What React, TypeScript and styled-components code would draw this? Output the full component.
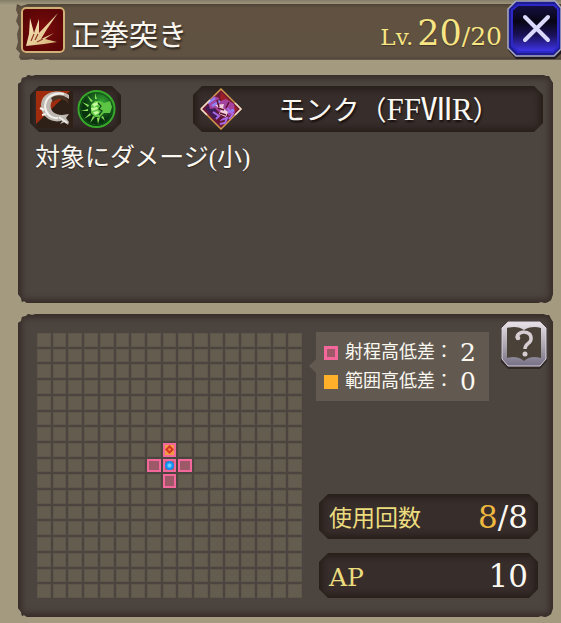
import React from "react";
import styled, { createGlobalStyle } from "styled-components";

const numerals = `"DejaVu Serif", "Liberation Serif", serif`;

const GlobalStyle = createGlobalStyle`
  * { box-sizing: border-box; }
  html, body { margin: 0; }
  body {
    min-height: 100vh;
    background: linear-gradient(to bottom, #857c68 0, #a39a80 5px);
    color: #fbf8f2;
    font-family: "Liberation Serif", "Noto Sans CJK JP", serif;
  }
  button { border: 0; padding: 0; background: none; cursor: pointer; }
  svg { display: block; }
  h1, h2, p, dl, dd, dt { margin: 0; font-weight: 400; }
`;

const Page = styled.main`
  padding: 0 0 6px;
`;

const Header = styled.header`
  display: flex;
  align-items: center;
  height: 60px;
  margin-left: 16px;
  background: linear-gradient(to bottom, transparent 4px, #4d4235 4px, #605140 8px, #605242 56px, #51463a 59px, #71695a 60px);
  clip-path: polygon(
    1px 4px, 5px 6px, 12px 4px, 100% 0, 100% 100%, 40px 100%, 37px 62px, 32px 59px, 25px 60px,
    22px 62px, 17px 59px, 11px 60px, 6px 62px, 3px 57px, 4px 53px, 0 49px, 2px 42px, 1px 34px,
    3px 27px, 0 21px, 2px 15px, 0 10px
  );
`;

const SkillBadge = styled.span`
  flex: none;
  margin: 0 5px 0 4px;
`;

const Title = styled.h1`
  flex: 1;
  padding-top: 12px;
  font-size: 29px;
  line-height: 44px;
  text-shadow: 1px 2px 2px #2b241d;
`;

const Level = styled.p`
  display: flex;
  align-items: baseline;
  padding-top: 10px;
  margin-right: 5px;
  color: #f8e584;
  font-family: ${numerals};
  font-size: 23px;
  line-height: 44px;
  text-shadow: 0 1px 1px #40362b;
`;

const LevelNow = styled.strong`
  margin-left: 4px;
  font-size: 35px;
  font-weight: 400;
`;

const LevelMax = styled.span`
  font-size: 25px;
`;

const IconButton = styled.button`
  flex: none;
`;

const CloseButton = styled(IconButton)`
  align-self: flex-start;
`;

const Panel = styled.section`
  margin: 0 8px 0 18px;
  background: #4c443f;
  box-shadow: inset 0 0 7px 3px #342924;
  clip-path: polygon(
    0 9px, 3px 7px, 4px 3px, 8px 2px, 10px 0, 14px 1px, 18px 0,
    calc(100% - 10px) 0, calc(100% - 7px) 1px, calc(100% - 4px) 1px, calc(100% - 2px) 5px, 100% 8px,
    100% calc(100% - 9px), calc(100% - 2px) calc(100% - 3px), calc(100% - 5px) calc(100% - 1px),
    calc(100% - 8px) 100%, calc(100% - 12px) calc(100% - 1px), calc(100% - 15px) 100%,
    9px 100%, 6px calc(100% - 2px), 4px calc(100% - 1px), 3px calc(100% - 5px), 0 calc(100% - 9px)
  );
`;

const SkillPanel = styled(Panel)`
  min-height: 228px;
  margin-top: 15px;
  padding: 11px 10px 11px 12px;
`;

const RangePanel = styled(Panel)`
  display: grid;
  grid-template-columns: 265fr 237fr;
  gap: 8px;
  margin-top: 11px;
  padding: 7px 6px 19px 19px;
`;

const Plate = styled.div`
  position: relative;
  z-index: 0;
  display: flex;
  align-items: center;
  height: 46px;
  background: #271e19;
  clip-path: polygon(
    9px 0, calc(100% - 9px) 0, 100% 9px, 100% calc(100% - 9px),
    calc(100% - 9px) 100%, 9px 100%, 0 calc(100% - 9px), 0 9px
  );

  &::before {
    content: "";
    position: absolute;
    z-index: -1;
    inset: 4px;
    background: #372d2b;
    filter: blur(3px);
  }
`;

const SkillTop = styled.div`
  display: flex;
  justify-content: space-between;
  gap: 16px;
`;

const TypePlate = styled(Plate)`
  flex: none;
  gap: 4px;
  padding: 0 5px 0 6px;
`;

const JobPlate = styled(Plate)`
  flex: 0 1 350px;
  padding: 0 7px;
`;

const JobName = styled.h2`
  flex: 1;
  padding-top: 3px;
  font-size: 27px;
  line-height: 46px;
  text-align: center;
  white-space: nowrap;
  text-shadow: 1px 2px 2px #120d0b;
`;

const Latin = styled.span`
  font-size: 31px;
`;

const Description = styled.p`
  padding: 8px 5px;
  font-size: 25px;
  line-height: 36px;
  text-shadow: 0 1px 1px #2b241d;
`;

const Board = styled.div`
  display: grid;
  grid-template-columns: repeat(17, minmax(0, 1fr));
  grid-template-rows: repeat(17, minmax(0, 1fr));
  gap: 2px;
  aspect-ratio: 1;
  align-self: start;
  margin-top: 12px;
`;

type CellKind = "empty" | "range" | "effect" | "self";

const cellFill: Record<CellKind, string> = {
  empty: "#645c4f",
  range: "#9d5968",
  effect: "#f39a45",
  self: "radial-gradient(circle, #6bd5ff 0 1px, #168df0 3px 4px, #a75b75 5px)",
};

const Cell = styled.span<{ $kind: CellKind }>`
  display: grid;
  place-items: center;
  border: ${(p) => (p.$kind === "empty" ? "1px solid #5e564b" : "2px solid #f3679a")};
  background: ${(p) => cellFill[p.$kind]};
`;

const Side = styled.div`
  display: flex;
  flex-direction: column;
  justify-content: space-between;
`;

const SideTop = styled.div`
  display: flex;
  align-items: flex-start;
  justify-content: space-between;
`;

const Legend = styled.dl`
  position: relative;
  margin: 11px 0 0 6px;
  padding: 6px 13px 5px 8px;
  background: #625a50;

  &::before {
    content: "";
    position: absolute;
    right: 100%;
    top: 27px;
    border: 7px solid transparent;
    border-left: 0;
    border-right-color: #625a50;
  }
`;

const LegendRow = styled.div`
  display: flex;
  align-items: center;
  height: 29px;
  font-size: 18px;
  line-height: 29px;
`;

const Swatch = styled.span<{ $fill: string; $edge: string }>`
  width: 14px;
  height: 14px;
  margin-right: 7px;
  border: 3px solid ${(p) => p.$edge};
  background: ${(p) => p.$fill};
`;

const LegendValue = styled.dd`
  width: 16px;
  margin-left: 7px;
  font-family: ${numerals};
  font-size: 25px;
  text-align: center;
`;

const Stats = styled.dl`
  display: grid;
  gap: 14px;
  margin: 0 9px;
`;

const StatPlate = styled(Plate)`
  justify-content: space-between;
  height: 45px;
  padding: 0 10px;
`;

const StatName = styled.dt`
  padding-top: 5px;
  color: #ecdc7e;
  font-size: 23px;
  line-height: 40px;
`;

const StatLatinName = styled(StatName)`
  font-family: ${numerals};
  font-size: 25px;
`;

const StatValue = styled.dd`
  padding-top: 2px;
  font-family: ${numerals};
  font-size: 31px;
  line-height: 43px;
`;

const Remaining = styled.span`
  color: #edb83f;
`;

const ClawIcon = () => (
  <svg width="46" height="48" viewBox="0 0 46 48" aria-hidden="true">
    <defs>
      <linearGradient id="clawGold" x1="0" y1="0" x2="1" y2="1">
        <stop offset="0" stopColor="#fff3c8" />
        <stop offset="1" stopColor="#d3ad72" />
      </linearGradient>
      <radialGradient id="clawRed">
        <stop offset="0" stopColor="#7d0c0d" />
        <stop offset="1" stopColor="#5c0506" />
      </radialGradient>
    </defs>
    <rect x="1" y="1" width="44" height="46" rx="5" fill="#332218" />
    <rect x="2" y="2" width="42" height="44" rx="4" fill="url(#clawRed)" stroke="#d0b076" strokeWidth="2" />
    <path
      d="M6 40 L9 28 L10 12 L14 27 L19 13 L19 27 L38 7 L27 23 L21 33 L34 27 L25 33 L37 36 L24 38 Z"
      fill="url(#clawGold)"
    />
    <path d="M11 35 L14 28 M15 34 L18 28 M17 36 L23 33" stroke="#8b3a26" strokeWidth="1.2" />
  </svg>
);

const CloseIcon = () => (
  <svg width="54" height="59" viewBox="0 0 54 59" aria-hidden="true">
    <defs>
      <linearGradient id="closeFill" x1="0" y1="0" x2="0" y2="1">
        <stop offset="0" stopColor="#151044" />
        <stop offset="0.35" stopColor="#080514" />
        <stop offset="0.65" stopColor="#1b125c" />
        <stop offset="1" stopColor="#4136f0" />
      </linearGradient>
    </defs>
    <path d="M9 2 H49 L55 8 V53 L48 59 H9 L1 50 V10 Z" fill="#201b23" />
    <path d="M9 1 H48 L54 8 V49 L47 56 H9 L1 48 V9 Z" fill="#1f1b90" stroke="#a9acc3" strokeWidth="1.5" />
    <path d="M11 5 H47 L51 9 V47 L46 52 H11 L5 46 V10 Z" fill="url(#closeFill)" stroke="#2c28c8" strokeWidth="2" />
    <path d="M18 17 L41 40 M41 17 L18 40" stroke="#dad9fb" strokeWidth="4" strokeLinecap="round" />
  </svg>
);

const SlashIcon = () => (
  <svg width="37" height="38" viewBox="0 0 37 38" aria-hidden="true">
    <path d="M0 1 H37 V38 H0 Z" fill="#2e2017" />
    <path d="M0 1 H34 L0 34 Z" fill="#a02c0d" />
    <path
      d="M33 5 C26 0 13 0 7 8 C2 17 7 29 18 31 C22 32 25 31 27 30 L24 34 L29 32 L32 35 L33 32 L30 28 L33 24 L26 25 C18 25 13 20 15 13 C18 6 26 4 33 9 Z"
      fill="#bdb7af"
    />
    <path d="M15 8 C19 5 26 4 31 8 L33 15 C30 8 22 7 17 12 Z" fill="#4a3426" />
    <path d="M28 4 C16 2 9 8 9 17 C10 24 15 29 22 28 M8 20 L4 18 M10 24 L6 25" fill="none" stroke="#f2f0ec" strokeWidth="2" />
    <path d="M23 27 L31 33" stroke="#efede7" strokeWidth="2" />
  </svg>
);

const FistIcon = () => (
  <svg width="39" height="40" viewBox="0 0 39 40" aria-hidden="true">
    <defs>
      <radialGradient id="fistGreen" cx="0.65" cy="0.3">
        <stop offset="0" stopColor="#34a534" />
        <stop offset="1" stopColor="#07330d" />
      </radialGradient>
    </defs>
    <circle cx="19.5" cy="20" r="18" fill="url(#fistGreen)" stroke="#37a82a" strokeWidth="2" />
    <circle cx="19.5" cy="20" r="16" fill="none" stroke="#14531c" strokeWidth="1" />
    <path
      d="M10 6 L16 12 L14 13 Z M18 4 L20 10 H18 Z M5 13 L12 16 L11 18 Z M4 22 L11 20 V22 Z M7 30 L13 24 L14 26 Z M13 34 L16 27 L18 28 Z M21 35 L20 29 L23 28 Z M28 32 L24 28 L26 27 Z"
      fill="#8ce15e"
    />
    <path d="M14 16 L18 12 H23 L27 14 L33 12 L35 18 L33 24 L27 24 L23 28 H18 L14 24 Z" fill="#5cc544" />
    <path d="M15 15 L20 13 L22 15 L17 18 Z M14 19 L20 18 L21 20 L15 22 Z M16 23 L21 22 L22 24 L18 26 Z" fill="#c4f99b" />
    <path d="M21 14 L24 17 L22 20 L25 22 L22 26" fill="none" stroke="#164b19" strokeWidth="1.3" />
  </svg>
);

const JobIcon = () => (
  <svg width="42" height="42" viewBox="0 0 42 42" aria-hidden="true">
    <path d="M21 1 L41 21 L21 41 L1 21 Z" fill="#6a1938" stroke="#d39a4c" strokeWidth="1.5" />
    <path d="M21 4 L38 21 L31 28 L20 10 Z" fill="#9e1f26" />
    <path d="M5 20 L13 13 L19 31 L14 31 Z" fill="#401d57" />
    <path d="M8 14 L14 8 L19 10 L18 14 L26 11 L34 16 L35 25 L29 28 L26 24 L20 25 L15 20 L10 21 Z" fill="#a5449f" />
    <path d="M8 15 L15 10 M12 18 L20 13 M28 24 L34 22" stroke="#8c83fa" strokeWidth="2.5" />
    <path d="M15 17 L24 16 L23 20 L28 24 L26 29 L19 26 L21 22 Z" fill="#f0d0df" />
    <path d="M13 24 L19 28 L16 31 M20 32 L27 30 L25 35 L20 36 M27 20 L33 26 L29 31" fill="none" stroke="#a66ae8" strokeWidth="2" />
    <path d="M18 20 L24 22 M20 25 L26 27 M17 12 L19 19 M29 14 L26 20 M23 29 L17 34" stroke="#611133" strokeWidth="1.5" />
    <path d="M1 21 L10 12 M1 21 L7 27 M35 15 L41 21 L35 27" fill="none" stroke="#efdbd1" strokeWidth="1.5" />
  </svg>
);

const HelpIcon = () => (
  <svg width="46" height="48" viewBox="0 0 46 48" aria-hidden="true">
    <defs>
      <linearGradient id="silver" x1="0" y1="0" x2="0" y2="1">
        <stop offset="0" stopColor="#e9e2e9" />
        <stop offset="0.55" stopColor="#aaa4ad" />
        <stop offset="1" stopColor="#777086" />
      </linearGradient>
    </defs>
    <path d="M8 2 H38 L46 9 V40 L39 48 H7 L0 41 V9 Z" fill="#302925" />
    <path d="M7 1 H39 L45 7 V38 L39 45 H7 L1 38 V7 Z" fill="url(#silver)" stroke="#dbd4df" strokeWidth="1" />
    <path d="M6 7 C13 5 19 6 23 9 C27 6 34 5 40 7 V37 C33 35 27 36 23 40 C19 36 12 35 6 37 Z" fill="#4a4239" />
    <path d="M16 17 C16 9 31 9 30 18 C30 23 24 22 24 28" fill="none" stroke="#d6ced2" strokeWidth="3.5" />
    <circle cx="17" cy="17" r="2.3" fill="#d6ced2" />
    <circle cx="24" cy="33" r="2.5" fill="#d6ced2" />
  </svg>
);

const TargetMark = () => (
  <svg width="9" height="9" viewBox="0 0 10 10" aria-hidden="true">
    <path d="M5 0 L10 5 L5 10 L0 5 Z" fill="#d63327" />
    <circle cx="5" cy="5" r="1.5" fill="#f98a3d" />
  </svg>
);

const SIZE = 17;
const CENTER = 8;

const marked: Record<string, CellKind> = {
  [`${CENTER},${CENTER}`]: "self",
  [`${CENTER},${CENTER - 1}`]: "effect",
  [`${CENTER - 1},${CENTER}`]: "range",
  [`${CENTER + 1},${CENTER}`]: "range",
  [`${CENTER},${CENTER + 1}`]: "range",
};

const cells: CellKind[] = Array.from(
  { length: SIZE * SIZE },
  (_, i) => marked[`${i % SIZE},${Math.floor(i / SIZE)}`] ?? "empty",
);

export default function App() {
  return (
    <>
      <GlobalStyle />
      <Page>
        <Header>
          <SkillBadge><ClawIcon /></SkillBadge>
          <Title>正拳突き</Title>
          <Level>
            Lv.<LevelNow>20</LevelNow><LevelMax>/20</LevelMax>
          </Level>
          <CloseButton type="button" aria-label="閉じる"><CloseIcon /></CloseButton>
        </Header>

        <SkillPanel>
          <SkillTop>
            <TypePlate>
              <SlashIcon />
              <FistIcon />
            </TypePlate>
            <JobPlate>
              <JobIcon />
              <JobName>モンク（<Latin>FFⅦR</Latin>）</JobName>
            </JobPlate>
          </SkillTop>
          <Description>対象にダメージ(小)</Description>
        </SkillPanel>

        <RangePanel>
          <Board role="img" aria-label="射程と範囲">
            {cells.map((kind, i) => (
              <Cell key={i} $kind={kind}>{kind === "effect" && <TargetMark />}</Cell>
            ))}
          </Board>
          <Side>
            <SideTop>
              <Legend>
                <LegendRow>
                  <Swatch $fill="#9d5968" $edge="#f3679a" />
                  <dt>射程高低差：</dt>
                  <LegendValue>2</LegendValue>
                </LegendRow>
                <LegendRow>
                  <Swatch $fill="#ffb02b" $edge="#ffb02b" />
                  <dt>範囲高低差：</dt>
                  <LegendValue>0</LegendValue>
                </LegendRow>
              </Legend>
              <IconButton type="button" aria-label="ヘルプ"><HelpIcon /></IconButton>
            </SideTop>
            <Stats>
              <StatPlate>
                <StatName>使用回数</StatName>
                <StatValue><Remaining>8</Remaining>/8</StatValue>
              </StatPlate>
              <StatPlate>
                <StatLatinName>AP</StatLatinName>
                <StatValue>10</StatValue>
              </StatPlate>
            </Stats>
          </Side>
        </RangePanel>
      </Page>
    </>
  );
}
